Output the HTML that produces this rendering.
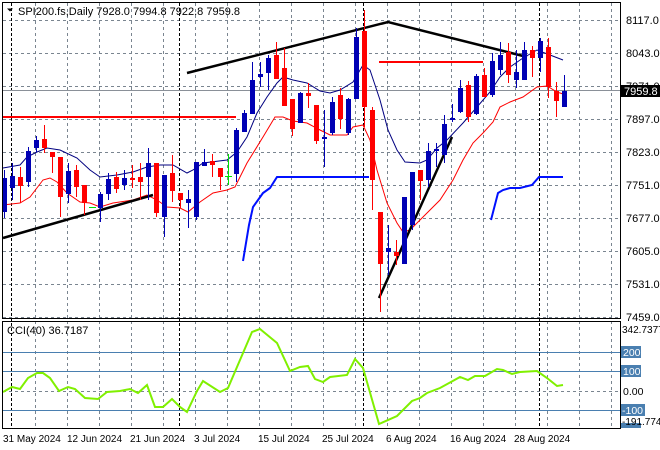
<!DOCTYPE html>
<html><head><meta charset="utf-8"><style>
html,body{margin:0;padding:0;background:#fff;}
svg{display:block;font-family:"Liberation Sans",sans-serif;}
</style></head><body>
<svg width="660" height="450" viewBox="0 0 660 450" xmlns="http://www.w3.org/2000/svg">
<rect width="660" height="450" fill="#fff"/>
<g stroke="#7a8590" stroke-width="1" stroke-dasharray="3,3" fill="none">
<path d="M3 20.5H620M3 53.5H620M3 86.5H620M3 119.5H620M3 152.5H620M3 185.5H620M3 218.5H620M3 251.5H620M3 284.5H620M3 317.5H620"/>
<path d="M3 391.5H620"/>
<path d="M35.5 3V428M67.5 3V428M99.5 3V428M131.5 3V428M163.5 3V428M195.5 3V428M227.5 3V428M259.5 3V428M291.5 3V428M323.5 3V428M355.5 3V428M387.5 3V428M419.5 3V428M451.5 3V428M483.5 3V428M515.5 3V428M547.5 3V428M579.5 3V428M611.5 3V428"/>
</g>
<g stroke="#000" stroke-width="1" stroke-dasharray="3,2">
<path d="M11.5 3V428M179.5 3V428M363.5 3V428M539.5 3V428"/>
</g>
<line x1="3" y1="90.5" x2="620" y2="90.5" stroke="#8a9098"/>
<g stroke="#4a7fb0" stroke-width="1">
<line x1="3" y1="352.5" x2="620" y2="352.5"/>
<line x1="3" y1="371.5" x2="620" y2="371.5"/>
<line x1="3" y1="410.5" x2="620" y2="410.5"/>
</g>
<g stroke="#ff0000" stroke-width="2">
<line x1="3" y1="117" x2="236" y2="117"/>
<line x1="379" y1="62" x2="483" y2="62"/>
</g>
<g stroke="#0010ff" stroke-width="2" fill="none">
<polyline points="243,261 249,225 253,207 263,193 270,188 277,177 369,177"/>
<polyline points="491,220 498,193 503,190 510,188 520,188 532,185 539,177 563,177"/>
</g>
<polyline fill="none" stroke="#000080" stroke-width="1" points="3,168 20,165 27,157 37,152 47,148 60,150 77,158 90,170 100,177 117,175 133,172 147,167 160,165 173,165 187,173 193,170 203,163 227,160 237,152 247,137 257,113 267,97 277,83 283,77 293,80 307,83 320,91 330,93 340,90 353,82 363,65 370,70 380,100 388,130 397,150 405,162 420,163 427,160 437,148 447,140 463,123 477,107 490,92 500,77 510,67 523,58 537,50 550,55 563,60"/>
<polyline fill="none" stroke="#ff0000" stroke-width="1" points="3,205 20,203 30,197 43,180 50,178 57,182 67,193 80,202 90,203 100,207 113,203 133,200 147,195 157,200 167,207 180,208 188,212 200,202 213,193 227,190 235,187 247,163 263,137 275,117 283,117 293,121 307,123 320,130 330,135 347,135 353,127 363,125 370,140 377,170 387,203 397,223 403,232 410,230 417,223 427,213 440,200 453,180 463,160 473,143 483,133 493,122 500,107 510,102 523,97 537,87 547,86 557,92 563,94"/>
<g stroke="#000" stroke-width="2.5" fill="none">
<line x1="3" y1="238" x2="153" y2="195"/>
<polyline points="187,73 388,22 527,57"/>
<line x1="379" y1="298" x2="452" y2="137"/>
</g>
<g>
<g stroke="#0000b4" fill="#0000b4">
<path d="M4.5 170V218M12.5 163V200M28.5 147V187M36.5 136V152M68.5 163V203M100.5 192V222M108.5 173V200M124.5 170V190M148.5 148V200M164.5 175V237M188.5 190V228M196.5 162V220M204.5 149V166M236.5 128V182M244.5 110V132M252.5 62V114M260.5 62V87M268.5 55V90M300.5 92V123M324.5 110V167M332.5 97V135M348.5 98V135M356.5 28V99M388.5 225V275M404.5 197V264M412.5 172V230M428.5 143V187M436.5 143V167M444.5 115V163M452.5 104V122M460.5 80V113M476.5 74V115M492.5 53V97M500.5 42V75M516.5 50V88M524.5 42V80M540.5 38V72M564.5 75V107" stroke-width="1" fill="none"/>
<rect x="2" y="178" width="5" height="34" stroke="none"/>
<rect x="10" y="176" width="5" height="12" stroke="none"/>
<rect x="26" y="151" width="5" height="31" stroke="none"/>
<rect x="34" y="140" width="5" height="8" stroke="none"/>
<rect x="66" y="171" width="5" height="23" stroke="none"/>
<rect x="98" y="194" width="5" height="14" stroke="none"/>
<rect x="106" y="179" width="5" height="15" stroke="none"/>
<rect x="122" y="178" width="5" height="7" stroke="none"/>
<rect x="146" y="163" width="5" height="14" stroke="none"/>
<rect x="162" y="175" width="5" height="42" stroke="none"/>
<rect x="186" y="199" width="5" height="4" stroke="none"/>
<rect x="194" y="162" width="5" height="55" stroke="none"/>
<rect x="202" y="162" width="5" height="4" stroke="none"/>
<rect x="234" y="130" width="5" height="44" stroke="none"/>
<rect x="242" y="113" width="5" height="19" stroke="none"/>
<rect x="250" y="80" width="5" height="34" stroke="none"/>
<rect x="258" y="74" width="5" height="3" stroke="none"/>
<rect x="266" y="58" width="5" height="15" stroke="none"/>
<rect x="298" y="93" width="5" height="30" stroke="none"/>
<rect x="322" y="137" width="5" height="2" stroke="none"/>
<rect x="330" y="102" width="5" height="31" stroke="none"/>
<rect x="346" y="99" width="5" height="34" stroke="none"/>
<rect x="354" y="37" width="5" height="62" stroke="none"/>
<rect x="386" y="248" width="5" height="4" stroke="none"/>
<rect x="402" y="197" width="5" height="67" stroke="none"/>
<rect x="410" y="172" width="5" height="53" stroke="none"/>
<rect x="426" y="151" width="5" height="29" stroke="none"/>
<rect x="434" y="149" width="5" height="2" stroke="none"/>
<rect x="442" y="124" width="5" height="31" stroke="none"/>
<rect x="450" y="118" width="5" height="2" stroke="none"/>
<rect x="458" y="88" width="5" height="24" stroke="none"/>
<rect x="474" y="76" width="5" height="38" stroke="none"/>
<rect x="490" y="61" width="5" height="34" stroke="none"/>
<rect x="498" y="55" width="5" height="15" stroke="none"/>
<rect x="514" y="72" width="5" height="8" stroke="none"/>
<rect x="522" y="50" width="5" height="30" stroke="none"/>
<rect x="538" y="41" width="5" height="17" stroke="none"/>
<rect x="562" y="91" width="5" height="16" stroke="none"/>
</g>
<g fill="#ff0000">
<path d="M20.5 167V203M44.5 125V153M52.5 152V173M60.5 157V217M76.5 165V197M84.5 185V215M116.5 172V193M132.5 165V188M140.5 163V200M156.5 163V217M172.5 155V202M180.5 193V208M212.5 154V177M220.5 168V190M276.5 42V79M284.5 48V106M292.5 99V136M308.5 83V108M316.5 105V144M340.5 88V129M364.5 10V127M372.5 107V210M380.5 212V312M396.5 240V265M420.5 170V200M468.5 81V122M484.5 68V97M508.5 43V83M532.5 46V77M548.5 38V98M556.5 82V117" stroke="#ff0000" stroke-width="1" fill="none"/>
<rect x="18" y="177" width="5" height="9"/>
<rect x="42" y="139" width="5" height="9"/>
<rect x="50" y="152" width="5" height="5"/>
<rect x="58" y="157" width="5" height="40"/>
<rect x="74" y="170" width="5" height="17"/>
<rect x="82" y="185" width="5" height="18"/>
<rect x="114" y="177" width="5" height="12"/>
<rect x="130" y="178" width="5" height="2"/>
<rect x="138" y="177" width="5" height="5"/>
<rect x="154" y="163" width="5" height="50"/>
<rect x="170" y="173" width="5" height="18"/>
<rect x="178" y="193" width="5" height="7"/>
<rect x="210" y="161" width="5" height="4"/>
<rect x="218" y="168" width="5" height="9"/>
<rect x="274" y="55" width="5" height="24"/>
<rect x="282" y="68" width="5" height="38"/>
<rect x="290" y="99" width="5" height="30"/>
<rect x="306" y="93" width="5" height="3"/>
<rect x="314" y="105" width="5" height="36"/>
<rect x="338" y="95" width="5" height="24"/>
<rect x="362" y="31" width="5" height="76"/>
<rect x="370" y="110" width="5" height="70"/>
<rect x="378" y="212" width="5" height="52"/>
<rect x="394" y="252" width="5" height="4"/>
<rect x="418" y="170" width="5" height="11"/>
<rect x="466" y="85" width="5" height="32"/>
<rect x="482" y="75" width="5" height="22"/>
<rect x="506" y="52" width="5" height="23"/>
<rect x="530" y="50" width="5" height="8"/>
<rect x="546" y="47" width="5" height="40"/>
<rect x="554" y="91" width="5" height="10"/>
</g>
<g stroke="#00e000" stroke-width="1">
<line x1="89" y1="207.5" x2="96" y2="207.5"/>
<line x1="228.5" y1="154" x2="228.5" y2="185"/>
<line x1="225" y1="176.5" x2="232" y2="176.5"/>
</g>
</g>
<polyline fill="none" stroke="#80f000" stroke-width="2" points="3,392 12,387 20,389 28,378 37,373 43,373 50,378 59,391 68,387 75,389 85,398 98,399 107,392 120,391 130,389 138,393 147,385 155,407 163,407 172,399 180,407 187,412 197,391 203,381 220,392 228,388 237,367 252,332 260,329 277,343 290,371 300,367 308,366 315,379 323,382 330,377 347,375 355,359 363,368 379,424 397,416 412,401 420,398 427,393 440,388 460,377 468,380 475,376 485,376 497,369 503,370 512,374 520,372 537,371 547,378 557,386 563,385"/>
<rect x="2.5" y="2.5" width="618" height="316" fill="none" stroke="#000"/>
<rect x="2.5" y="321.5" width="618" height="107" fill="none" stroke="#000"/>
<g font-size="11" fill="#000">
<text x="626" y="24">8117.0</text>
<text x="626" y="57">8043.0</text>
<text x="626" y="90">7971.0</text>
<text x="626" y="123">7897.0</text>
<text x="626" y="156">7823.0</text>
<text x="626" y="189">7751.0</text>
<text x="626" y="222">7677.0</text>
<text x="626" y="255">7605.0</text>
<text x="626" y="288">7531.0</text>
<text x="626" y="321">7459.0</text>
</g>
<rect x="621" y="85" width="39" height="12" fill="#000"/>
<text x="624" y="95" font-size="11" fill="#fff">7959.8</text>
<g font-size="10.5" fill="#000">
<text x="622" y="333" font-size="10">342.7377</text>
<rect x="621" y="346" width="20" height="12" fill="#4a7fb0"/>
<text x="623" y="356" fill="#fff">200</text>
<rect x="621" y="365" width="20" height="12" fill="#4a7fb0"/>
<text x="623" y="375" fill="#fff">100</text>
<text x="623" y="395">0.00</text>
<rect x="621" y="404" width="24" height="12" fill="#4a7fb0"/>
<text x="622" y="414" fill="#fff">-100</text>
<rect x="621" y="423" width="20" height="5" fill="#4a7fb0"/>
<text x="622" y="425" font-size="10">-191.774</text>
</g>
<g font-size="10" fill="#000">
<text x="3" y="442">31 May 2024</text>
<text x="67" y="442">12 Jun 2024</text>
<text x="130" y="442">21 Jun 2024</text>
<text x="194" y="442">3 Jul 2024</text>
<text x="258" y="442">15 Jul 2024</text>
<text x="322" y="442">25 Jul 2024</text>
<text x="386" y="442">6 Aug 2024</text>
<text x="450" y="442">16 Aug 2024</text>
<text x="514" y="442">28 Aug 2024</text>
</g>
<path d="M7 8.5h6l-3 3z" fill="#000"/>
<text x="18" y="15" font-size="11" fill="#000">SPI200.fs,Daily  7928.0 7994.8 7922.8 7959.8</text>
<text x="7" y="334" font-size="11" fill="#000">CCI(40) 36.7187</text>
</svg>
</body></html>
